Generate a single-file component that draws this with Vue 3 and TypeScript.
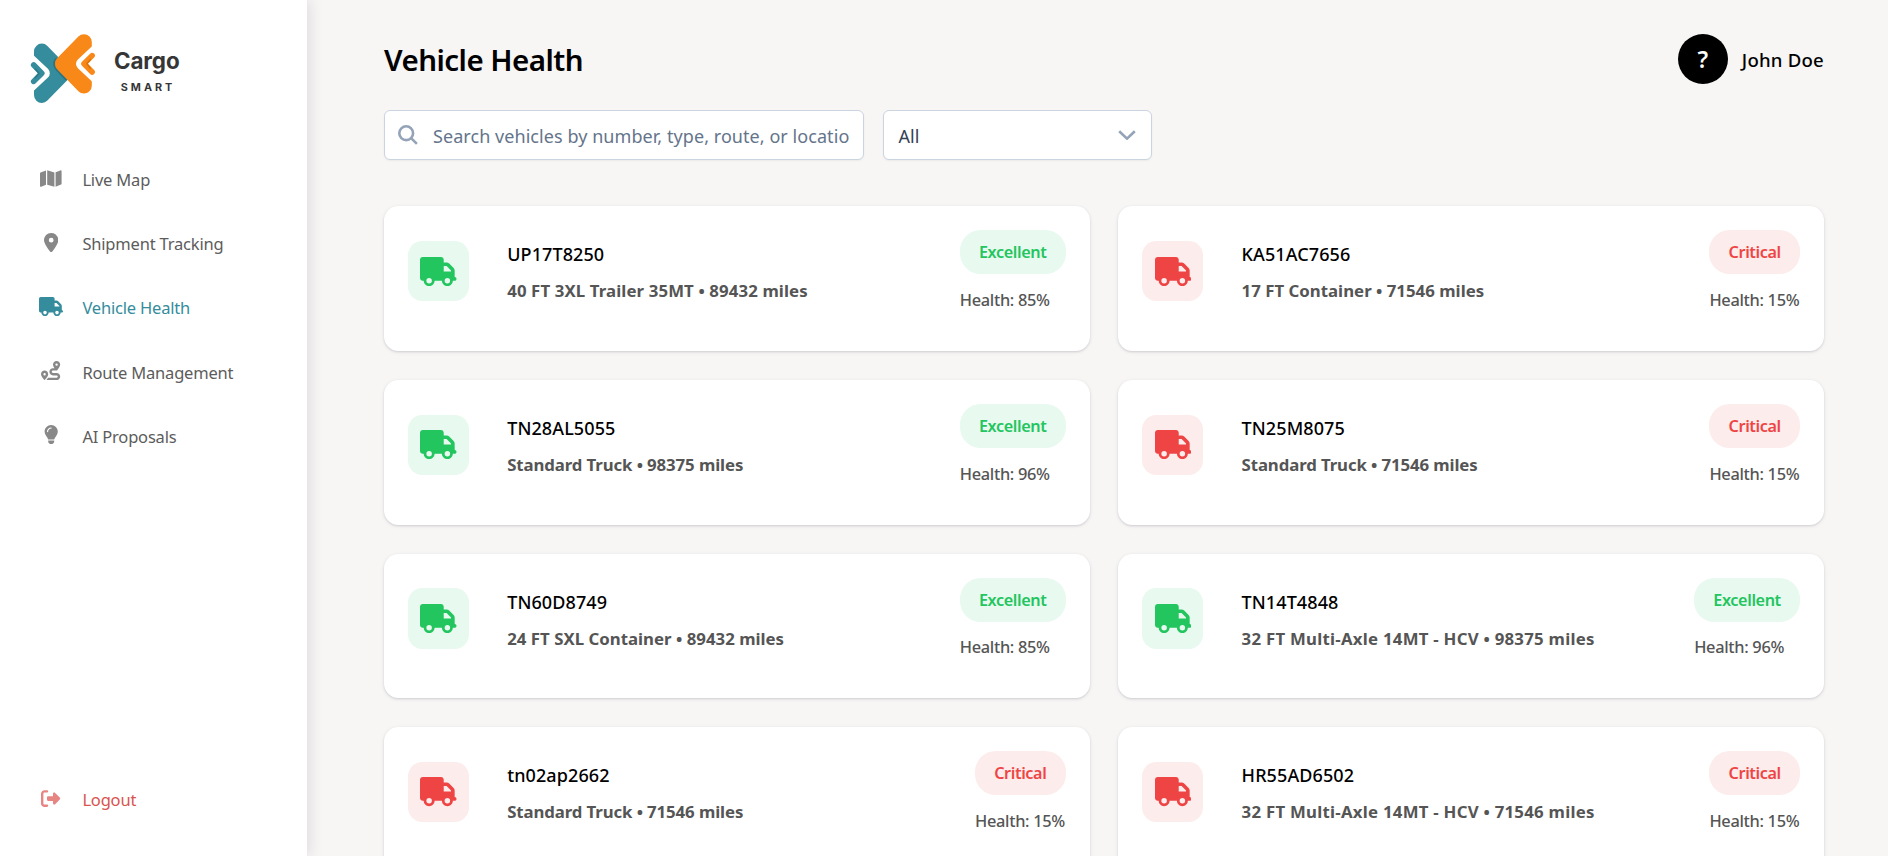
<script setup lang="ts">
import { ref } from 'vue'

type Status = 'Excellent' | 'Critical'

interface NavItem {
  label: string
  viewBox: string
  width: number
  path: string
  active?: boolean
}

interface Vehicle {
  plate: string
  type: string
  miles: number
  status: Status
  health: number
}

const truckPath =
  'M48 0C21.5 0 0 21.5 0 48V368c0 26.5 21.5 48 48 48H64c0 53 43 96 96 96s96-43 96-96H384c0 53 43 96 96 96s96-43 96-96h32c17.7 0 32-14.3 32-32s-14.3-32-32-32V288 256 237.3c0-17-6.7-33.3-18.7-45.3L512 114.7c-12-12-28.3-18.7-45.3-18.7H416V48c0-26.5-21.5-48-48-48H48zM416 160h50.7L544 237.3V256H416V160zM112 416a48 48 0 1 1 96 0 48 48 0 1 1 -96 0zm368-48a48 48 0 1 1 0 96 48 48 0 1 1 0-96z'

const logoutPath =
  'M377.9 105.9L500.7 228.7c7.2 7.2 11.3 17.1 11.3 27.3s-4.1 20.1-11.3 27.3L377.9 406.1c-6.4 6.4-15 9.9-24 9.9c-18.7 0-33.9-15.2-33.9-33.9l0-62.1-128 0c-17.7 0-32-14.3-32-32l0-64c0-17.7 14.3-32 32-32l128 0 0-62.1c0-18.7 15.2-33.9 33.9-33.9c9 0 17.6 3.6 24 9.9zM160 96L96 96c-17.7 0-32 14.3-32 32l0 256c0 17.7 14.3 32 32 32l64 0c17.7 0 32 14.3 32 32s-14.3 32-32 32l-64 0c-53 0-96-43-96-96L0 128C0 75 43 32 96 32l64 0c17.7 0 32 14.3 32 32s-14.3 32-32 32z'

const navItems: NavItem[] = [
  {
    label: 'Live Map',
    viewBox: '0 0 576 512',
    width: 21.6,
    path: 'M384 476.1L192 421.2V35.9L384 90.8V476.1zm32-1.2V88.4L543.1 37.5c15.8-6.3 32.9 5.3 32.9 22.3V394.6c0 9.8-6 18.6-15.1 22.3L416 474.8zM15.1 95.1L160 37.2V423.6L32.9 474.5C17.1 480.8 0 469.2 0 452.2V117.4c0-9.8 6-18.6 15.1-22.3z',
  },
  {
    label: 'Shipment Tracking',
    viewBox: '0 0 384 512',
    width: 14.4,
    path: 'M215.7 499.2C267 435 384 279.4 384 192C384 86 298 0 192 0S0 86 0 192c0 87.4 117 243 168.3 307.2c12.3 15.3 35.1 15.3 47.4 0zM192 128a64 64 0 1 1 0 128 64 64 0 1 1 0-128z',
  },
  { label: 'Vehicle Health', viewBox: '0 0 640 512', width: 24, path: truckPath, active: true },
  {
    label: 'Route Management',
    viewBox: '0 0 512 512',
    width: 19.2,
    path: 'M512 96c0 50.2-59.1 125.1-84.6 155c-3.8 4.4-9.4 6.1-14.5 5H320c-17.7 0-32 14.3-32 32s14.3 32 32 32h96c53 0 96 43 96 96s-43 96-96 96H139.6c8.7-9.9 19.3-22.6 30-36.8c6.3-8.4 12.8-17.6 19-27.2H416c17.7 0 32-14.3 32-32s-14.3-32-32-32H320c-53 0-96-43-96-96s43-96 96-96h39.8c-21-31.5-39.8-67.7-39.8-96c0-53 43-96 96-96s96 43 96 96zM117.1 489.1c-3.8 4.3-7.2 8.1-10.1 11.3l-1.8 2-.2-.2c-6 4.6-14.6 4-20-1.8C59.8 473 0 402.5 0 352c0-53 43-96 96-96s96 43 96 96c0 30-21.1 67-43.5 97.9c-10.7 14.7-21.7 28-30.8 38.5l-.6 .7zM128 352a32 32 0 1 0 -64 0 32 32 0 1 0 64 0zM416 128a32 32 0 1 0 0-64 32 32 0 1 0 0 64z',
  },
  {
    label: 'AI Proposals',
    viewBox: '0 0 384 512',
    width: 14.4,
    path: 'M272 384c9.6-31.9 29.5-59.1 49.2-86.2l0 0c5.2-7.1 10.4-14.2 15.4-21.4c19.8-28.5 31.4-63 31.4-100.3C368 78.8 289.2 0 192 0S16 78.8 16 176c0 37.3 11.6 71.9 31.4 100.3c5 7.2 10.2 14.3 15.4 21.4l0 0c19.8 27.1 39.7 54.4 49.2 86.2H272zM192 512c44.2 0 80-35.8 80-80V416H112v16c0 44.2 35.8 80 80 80zM112 176c0 8.8-7.2 16-16 16s-16-7.2-16-16c0-61.9 50.1-112 112-112c8.8 0 16 7.2 16 16s-7.2 16-16 16c-44.2 0-80 35.8-80 80z',
  },
]

const vehicles: Vehicle[] = [
  { plate: 'UP17T8250', type: '40 FT 3XL Trailer 35MT', miles: 89432, status: 'Excellent', health: 85 },
  { plate: 'KA51AC7656', type: '17 FT Container', miles: 71546, status: 'Critical', health: 15 },
  { plate: 'TN28AL5055', type: 'Standard Truck', miles: 98375, status: 'Excellent', health: 96 },
  { plate: 'TN25M8075', type: 'Standard Truck', miles: 71546, status: 'Critical', health: 15 },
  { plate: 'TN60D8749', type: '24 FT SXL Container', miles: 89432, status: 'Excellent', health: 85 },
  { plate: 'TN14T4848', type: '32 FT Multi-Axle 14MT - HCV', miles: 98375, status: 'Excellent', health: 96 },
  { plate: 'tn02ap2662', type: 'Standard Truck', miles: 71546, status: 'Critical', health: 15 },
  { plate: 'HR55AD6502', type: '32 FT Multi-Axle 14MT - HCV', miles: 71546, status: 'Critical', health: 15 },
]

// Longer type names are set slightly looser than short ones.
const tracking = (type: string): string => {
  if (type.length > 25) return '0.26px'
  if (type.length > 20) return '0.12px'
  if (type === 'Standard Truck') return '-0.1px'
  return '0.02px'
}

const search = ref('')
</script>

<template>
  <div class="layout">
    <aside class="sidebar">
      <svg class="logo" viewBox="27 32 180 80" width="180" height="80" role="img" aria-label="Cargo Smart">
        <g stroke-linecap="round" stroke-linejoin="round">
          <path d="M41.8 51.4 63.1 73.2 41.8 95.1Z" fill="#358c9c" stroke="#358c9c" stroke-width="15.6" />
          <path d="M43.8 73.2 27 57.4V89Z" fill="#fff" stroke="#fff" stroke-width="12" />
          <path d="M33.7 65 41.8 73.2 33.7 81.4" fill="none" stroke="#358c9c" stroke-width="5.6" />
          <path d="M35.3 69 39 73.2 35.3 77.6" fill="none" stroke="#2b7786" stroke-width="1.4" />
          <path d="M56.4 60.5Q54 64.5 57 68.2L66.2 78" fill="none" stroke="#2a7482" stroke-width="4.4" />
          <path d="M84 42 62.7 63.8 84 85.7Z" fill="#f88817" stroke="#f88817" stroke-width="15.6" />
          <path d="M82 63.8 98.8 48V79.6Z" fill="#fff" stroke="#fff" stroke-width="12" />
          <path d="M92.1 55.6 84 63.8 92.1 72" fill="none" stroke="#f88817" stroke-width="5.6" />
          <path d="M90.4 59.6 86.8 63.8 90.4 68.2" fill="none" stroke="#d9730f" stroke-width="1.4" />
        </g>
        <text class="brand" x="114" y="68.6">Cargo</text>
        <text class="brand-sub" x="120.8" y="91">SMART</text>
      </svg>
      <nav class="nav">
        <a v-for="item in navItems" :key="item.label" class="nav-item" :class="{ active: item.active }">
          <span class="nav-icon">
            <svg :viewBox="item.viewBox" :width="item.width" height="19.2"><path :d="item.path" /></svg>
          </span>
          <span>{{ item.label }}</span>
        </a>
      </nav>
      <a class="nav-item logout">
        <span class="nav-icon">
          <svg viewBox="0 0 512 512" width="19.2" height="19.2"><path :d="logoutPath" /></svg>
        </span>
        <span>Logout</span>
      </a>
    </aside>

    <main class="content">
      <header class="header">
        <h1>Vehicle Health</h1>
        <div class="user">
          <span class="avatar">?</span>
          <span class="name">John Doe</span>
        </div>
      </header>

      <div class="filters">
        <label class="search">
          <svg viewBox="0 0 20 20" width="20" height="20">
            <circle cx="8.2" cy="8.2" r="6.9" />
            <path d="M13.1 13.1 18.9 18.9" />
          </svg>
          <input v-model="search" type="text" placeholder="Search vehicles by number, type, route, or location" />
        </label>
        <div class="select">
          <span>All</span>
          <svg viewBox="0 0 18 10" width="18" height="10"><path d="M1.2 1.2 9 8.6 16.8 1.2" /></svg>
        </div>
      </div>

      <section class="grid">
        <article v-for="v in vehicles" :key="v.plate" class="card" :class="v.status.toLowerCase()">
          <div class="icon-box">
            <svg viewBox="0 0 640 512" width="36.5" height="29.2"><path :d="truckPath" /></svg>
          </div>
          <div class="info">
            <h3>{{ v.plate }}</h3>
            <p :style="{ letterSpacing: tracking(v.type) }">{{ v.type }} • {{ v.miles }} miles</p>
          </div>
          <div class="status">
            <span class="badge">{{ v.status }}</span>
            <span class="health">Health: {{ v.health }}%</span>
          </div>
        </article>
      </section>
    </main>
  </div>
</template>

<style>
body {
  margin: 0;
  overflow: hidden;
}
</style>

<style scoped>
.layout {
  display: flex;
  height: 100vh;
  overflow: hidden;
  background: #f7f6f5;
  font-family: 'Noto Sans', 'Open Sans', sans-serif;
  color: #000;
}

.sidebar {
  display: flex;
  flex-direction: column;
  flex: none;
  box-sizing: border-box;
  width: 307px;
  padding: 32px 0 24.5px 27px;
  background: #fff;
  box-shadow: 2px 0 14px rgba(30, 20, 50, 0.12);
}

.logo {
  flex: none;
  display: block;
}

.brand,
.brand-sub {
  font-family: Inter, sans-serif;
  font-weight: 700;
  fill: #363636;
}

.brand {
  font-size: 22.4px;
  letter-spacing: -0.1px;
}

.brand-sub {
  font-size: 10.8px;
  letter-spacing: 3px;
}

.nav {
  display: flex;
  flex-direction: column;
  margin-top: 35.5px;
}

.nav-item {
  display: flex;
  align-items: center;
  flex: none;
  gap: 19.4px;
  height: 64.2px;
  padding-left: 12px;
  font-size: 16.5px;
  letter-spacing: -0.19px;
  color: #5c5c5c;
}

.nav-icon {
  display: flex;
  justify-content: center;
  width: 24px;
  margin-top: -3px;
}

.nav-icon svg {
  display: block;
  fill: #888;
}

.nav-item.active,
.nav-item.active svg {
  color: #358c9c;
  fill: #358c9c;
}

.logout {
  margin-top: auto;
  color: #d9534f;
}

.logout .nav-icon {
  margin-top: -2px;
}

.logout svg {
  fill: #e68582;
}

.content {
  flex: 1;
  padding: 34px 64px 0 77px;
}

.header {
  display: flex;
  align-items: center;
  justify-content: space-between;
  height: 50px;
}

h1 {
  margin: 0;
  font-size: 29.5px;
  font-weight: 600;
  letter-spacing: -0.53px;
}

.user {
  display: flex;
  align-items: center;
  gap: 14px;
}

.avatar {
  display: flex;
  align-items: center;
  justify-content: center;
  width: 50px;
  height: 50px;
  border-radius: 50%;
  background: #000;
  color: #fff;
  font-size: 23px;
  font-weight: 600;
}

.name {
  margin-top: 1px;
  font-size: 18.6px;
  font-weight: 500;
  letter-spacing: 0.2px;
}

.filters {
  display: flex;
  gap: 19px;
  margin-top: 26px;
}

.search,
.select {
  display: flex;
  align-items: center;
  box-sizing: border-box;
  height: 50px;
  border: 1px solid #cbd5e1;
  border-radius: 6px;
  background: #fff;
  box-shadow: 0 1px 2px rgba(18, 18, 23, 0.05);
  font-size: 18px;
}

.search {
  gap: 15px;
  width: 480px;
  padding: 0 14.5px 0 13px;
}

.search svg,
.select svg {
  flex: none;
  fill: none;
  stroke: #94a3b8;
  stroke-width: 2.6;
}

.search svg {
  margin-top: -1px;
}

.search input {
  flex: 1;
  min-width: 0;
  padding: 2px 0 0;
  border: 0;
  outline: 0;
  background: transparent;
  font: inherit;
  letter-spacing: 0.06px;
}

.search input::placeholder {
  color: #64748b;
  opacity: 1;
}

.select {
  justify-content: space-between;
  width: 269px;
  padding: 0 15.5px 0 14.5px;
  color: #334155;
}

.select span {
  padding-top: 2px;
}

.grid {
  display: grid;
  grid-template-columns: 1fr 1fr;
  gap: 28.8px;
  margin-top: 46.4px;
}

.card {
  --tone: #22c55e;
  --soft: #e8f9ef;
  display: flex;
  align-items: flex-start;
  box-sizing: border-box;
  height: 144.8px;
  padding: 24px;
  border-radius: 14.4px;
  background: #fff;
  box-shadow:
    0 1px 2px rgba(30, 20, 50, 0.12),
    0 1px 4px rgba(30, 20, 50, 0.08);
}

.card.critical {
  --tone: #ef4444;
  --soft: #fdecec;
}

.icon-box {
  display: flex;
  align-items: center;
  justify-content: center;
  width: 61px;
  height: 60.4px;
  margin-top: 10.6px;
  border-radius: 14.4px;
  background: var(--soft);
}

.icon-box svg {
  fill: var(--tone);
}

.info {
  flex: 1;
  margin: 11px 0 0 38.2px;
}

h3,
p {
  margin: 0;
  white-space: nowrap;
}

h3 {
  font-size: 18px;
  font-weight: 500;
  line-height: 26px;
  letter-spacing: 0.1px;
}

p {
  margin-top: 11.1px;
  font-size: 16.8px;
  font-weight: 700;
  line-height: 26px;
  color: #555;
}

.status {
  display: flex;
  flex-direction: column;
  align-items: flex-start;
}

.badge {
  padding: 0 19.2px;
  border-radius: 20.8px;
  background: var(--soft);
  color: var(--tone);
  font-size: 16.2px;
  font-weight: 600;
  line-height: 44px;
  letter-spacing: -0.38px;
}

.health {
  margin-top: 12.6px;
  font-size: 16.4px;
  font-weight: 500;
  line-height: 26px;
  letter-spacing: -0.32px;
  color: #555;
}
</style>
